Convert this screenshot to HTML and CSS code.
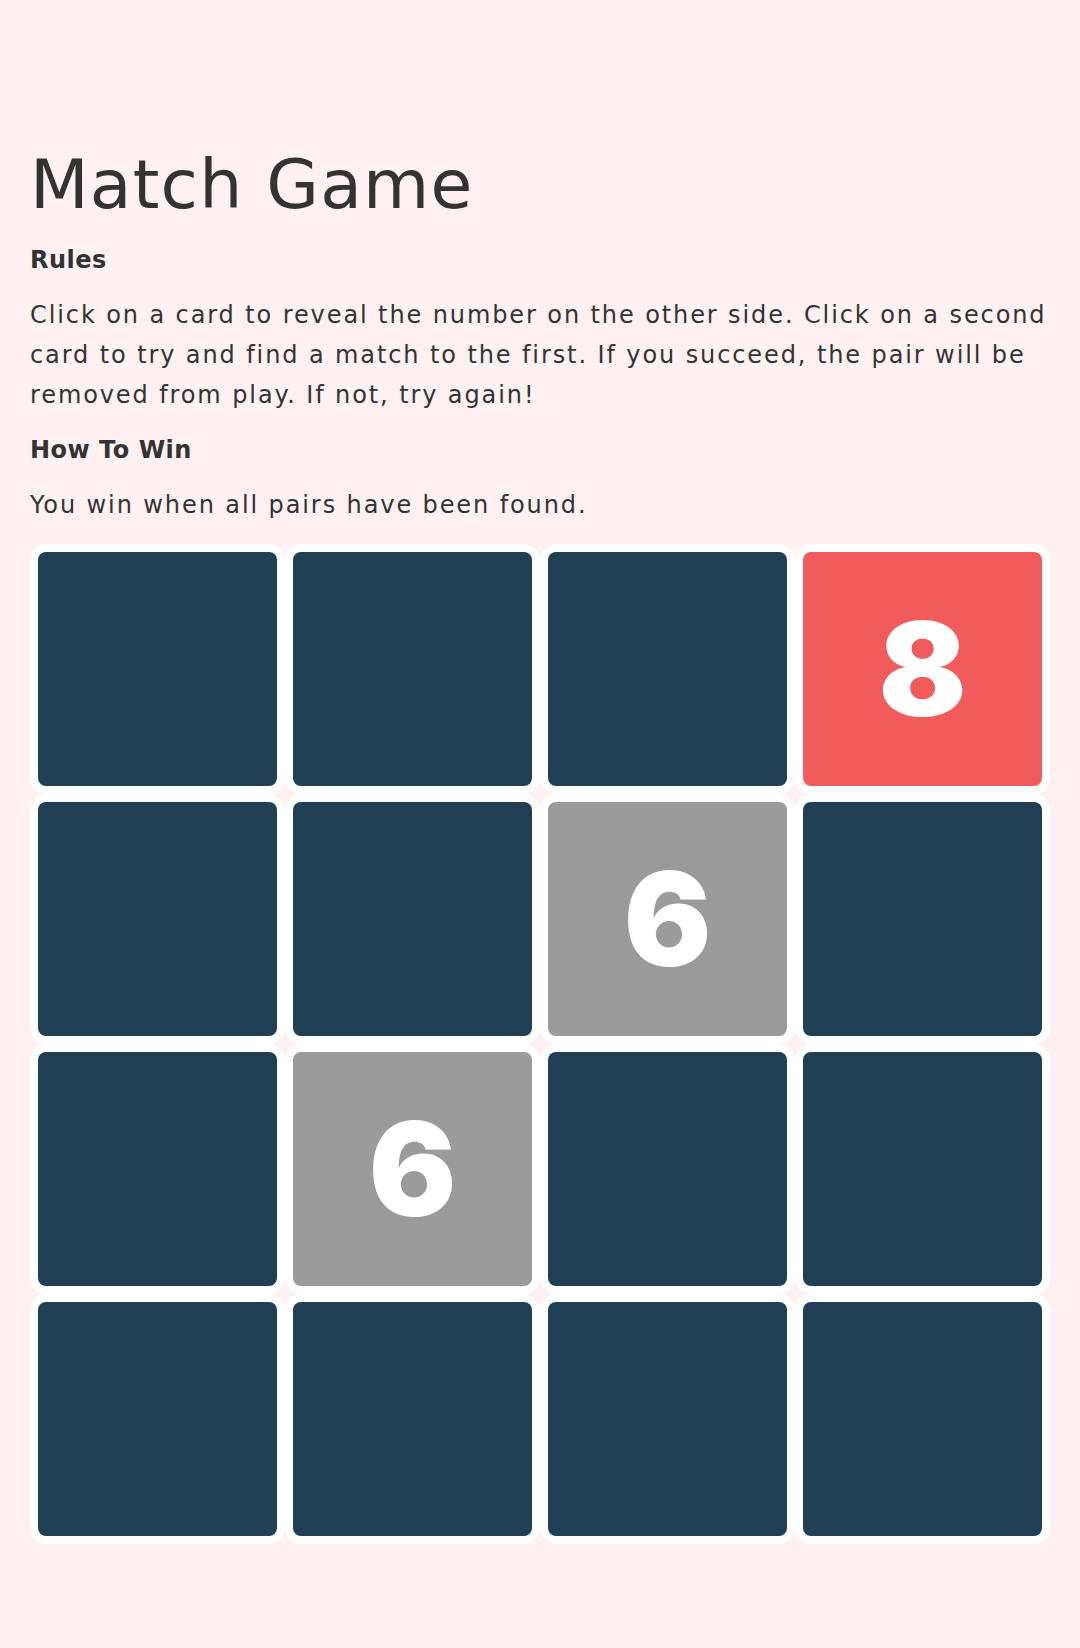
FILE: index.html
```html
<!DOCTYPE html>
<html lang="en">
<head>
<meta charset="utf-8">
<title>Match Game</title>
<link rel="stylesheet" href="styles.css">
</head>
<body>
<main class="page">
  <h1 class="title">Match Game</h1>
  <h2 class="subhead">Rules</h2>
  <p class="text">Click on a card to reveal the number on the other side. Click on a second card to try and find a match to the first. If you succeed, the pair will be removed from play. If not, try again!</p>
  <h2 class="subhead">How To Win</h2>
  <p class="text">You win when all pairs have been found.</p>
  <div class="board">
    <div class="slot"><div class="card"></div></div>
    <div class="slot"><div class="card"></div></div>
    <div class="slot"><div class="card"></div></div>
    <div class="slot"><div class="card card-flipped">8</div></div>
    <div class="slot"><div class="card"></div></div>
    <div class="slot"><div class="card"></div></div>
    <div class="slot"><div class="card card-matched">6</div></div>
    <div class="slot"><div class="card"></div></div>
    <div class="slot"><div class="card"></div></div>
    <div class="slot"><div class="card card-matched">6</div></div>
    <div class="slot"><div class="card"></div></div>
    <div class="slot"><div class="card"></div></div>
    <div class="slot"><div class="card"></div></div>
    <div class="slot"><div class="card"></div></div>
    <div class="slot"><div class="card"></div></div>
    <div class="slot"><div class="card"></div></div>
  </div>
</main>
</body>
</html>
```

FILE: styles.css
```css
html, body {
  margin: 0;
  padding: 0;
  background: #fff1f1;
}

body {
  font-family: "DejaVu Sans", "Liberation Sans", sans-serif;
  color: #333333;
}

.page {
  display: flex;
  flex-direction: column;
  padding: 137px 30px 0;
}

.title {
  margin: 0 0 9px;
  font-size: 68px;
  font-weight: 400;
  line-height: 96px;
  letter-spacing: 1.2px;
}

.subhead {
  margin: 0 0 17px;
  font-size: 24px;
  font-weight: 700;
  line-height: 36px;
  letter-spacing: 0.5px;
}

.text {
  margin: 0 0 17px;
  font-size: 24px;
  font-weight: 400;
  line-height: 40px;
  letter-spacing: 1.9px;
}

.board {
  display: grid;
  grid-template-columns: repeat(4, 1fr);
  grid-auto-rows: 250px;
  margin-top: 2px;
}

.slot {
  background: #ffffff;
  border-radius: 16px;
  padding: 8px;
  display: flex;
}

.card {
  flex: 1;
  border-radius: 8px;
  background: #213f54;
  display: flex;
  align-items: center;
  justify-content: center;
  color: #ffffff;
  font-family: Inter, "DejaVu Sans", sans-serif;
  font-weight: 900;
  font-size: 130px;
  line-height: 1;
}

.card-flipped {
  background: #f25b5b;
}

.card-matched {
  background: #9b9b9b;
}
```
